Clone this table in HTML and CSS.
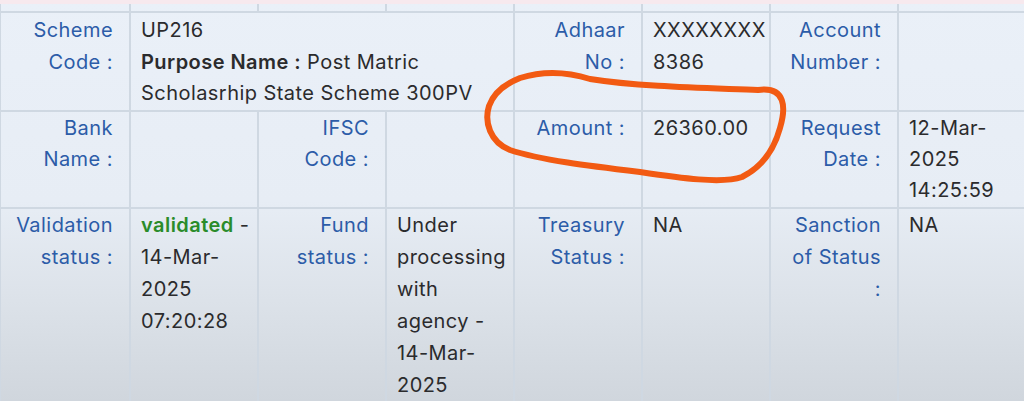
FILE: index.html
```html
<!DOCTYPE html>
<html>
<head>
<meta charset="utf-8">
<link rel="stylesheet" href="styles.css">
</head>
<body>
<div class="topstrip"></div>
<table class="details">
  <colgroup>
    <col class="c1"><col class="c"><col class="c"><col class="c"><col class="c"><col class="c"><col class="c"><col class="c8">
  </colgroup>
  <tr class="cut">
    <td></td><td></td><td></td><td></td><td></td><td></td><td></td><td></td>
  </tr>
  <tr class="r1">
    <th>Scheme Code :</th>
    <td colspan="3">UP216<br><b>Purpose Name :</b> Post Matric Scholasrhip State Scheme 300PV</td>
    <th>Adhaar No :</th>
    <td>XXXXXXXX 8386</td>
    <th>Account Number :</th>
    <td></td>
  </tr>
  <tr class="r2">
    <th>Bank Name :</th>
    <td></td>
    <th>IFSC Code :</th>
    <td></td>
    <th>Amount :</th>
    <td>26360.00</td>
    <th>Request Date :</th>
    <td>12-Mar-2025 14:25:59</td>
  </tr>
  <tr class="r3">
    <th>Validation status :</th>
    <td><span class="ok">validated</span> - 14-Mar-2025 07:20:28</td>
    <th>Fund status :</th>
    <td>Under processing with agency - 14-Mar-2025</td>
    <th>Treasury Status :</th>
    <td>NA</td>
    <th>Sanction of Status :</th>
    <td>NA</td>
  </tr>
</table>
<svg class="scribble" width="1024" height="401" viewBox="0 0 1024 401">
  <path d="M 520,78 C 545,70 568,72 590,79 C 640,87 710,88 758,90 C 786,86 786,108 780,128 C 774,150 762,167 742,177 C 722,184 680,178 640,172 C 590,166 540,160 510,150 C 490,142 484,122 489,106 C 494,92 505,84 520,78 Z" fill="none" stroke="#f25a12" stroke-width="6" stroke-linecap="round" stroke-linejoin="round"/>
</svg>
</body>
</html>
```

FILE: styles.css
```css
html, body {
  margin: 0;
  padding: 0;
}
body {
  width: 1024px;
  height: 401px;
  overflow: hidden;
  position: relative;
  font-family: Inter, "Noto Sans", sans-serif;
  font-size: 20px;
  line-height: 31.5px;
  letter-spacing: 0.45px;
  color: #2b2b2d;
  background: linear-gradient(180deg, #eaf0f8 0%, #e7edf5 50%, #dce2e9 75%, #d0d6dd 100%);
}
.topstrip {
  height: 4px;
  background: #f7e9ee;
}
.details {
  border-collapse: collapse;
  table-layout: fixed;
  width: 1026px;
  margin-left: -1px;
}
.c1 { width: 130px; }
.c { width: 128px; }
.c8 { width: 128px; }
.details th, .details td {
  border: 2px solid #cfd8e2;
  vertical-align: top;
  padding: 2px 3px 0 10px;
  overflow-wrap: break-word;
}
.details tr.cut td {
  border-top: none;
  height: 7px;
  padding: 0;
  line-height: 0;
}
.details th {
  text-align: right;
  font-weight: 400;
  color: #2c5ca8;
  padding-right: 16px;
}
.details td b {
  font-weight: 600;
  color: #2b2b2d;
}
.r1 th, .r1 td { height: 92px; }
.r2 th, .r2 td {
  height: 94px;
  padding-top: 1px;
  line-height: 31px;
}
.r3 th, .r3 td {
  padding-top: 0;
  line-height: 32px;
}
.ok {
  color: #2a8c2a;
  font-weight: 600;
}
.scribble {
  position: absolute;
  left: 0;
  top: 0;
  pointer-events: none;
}
```
